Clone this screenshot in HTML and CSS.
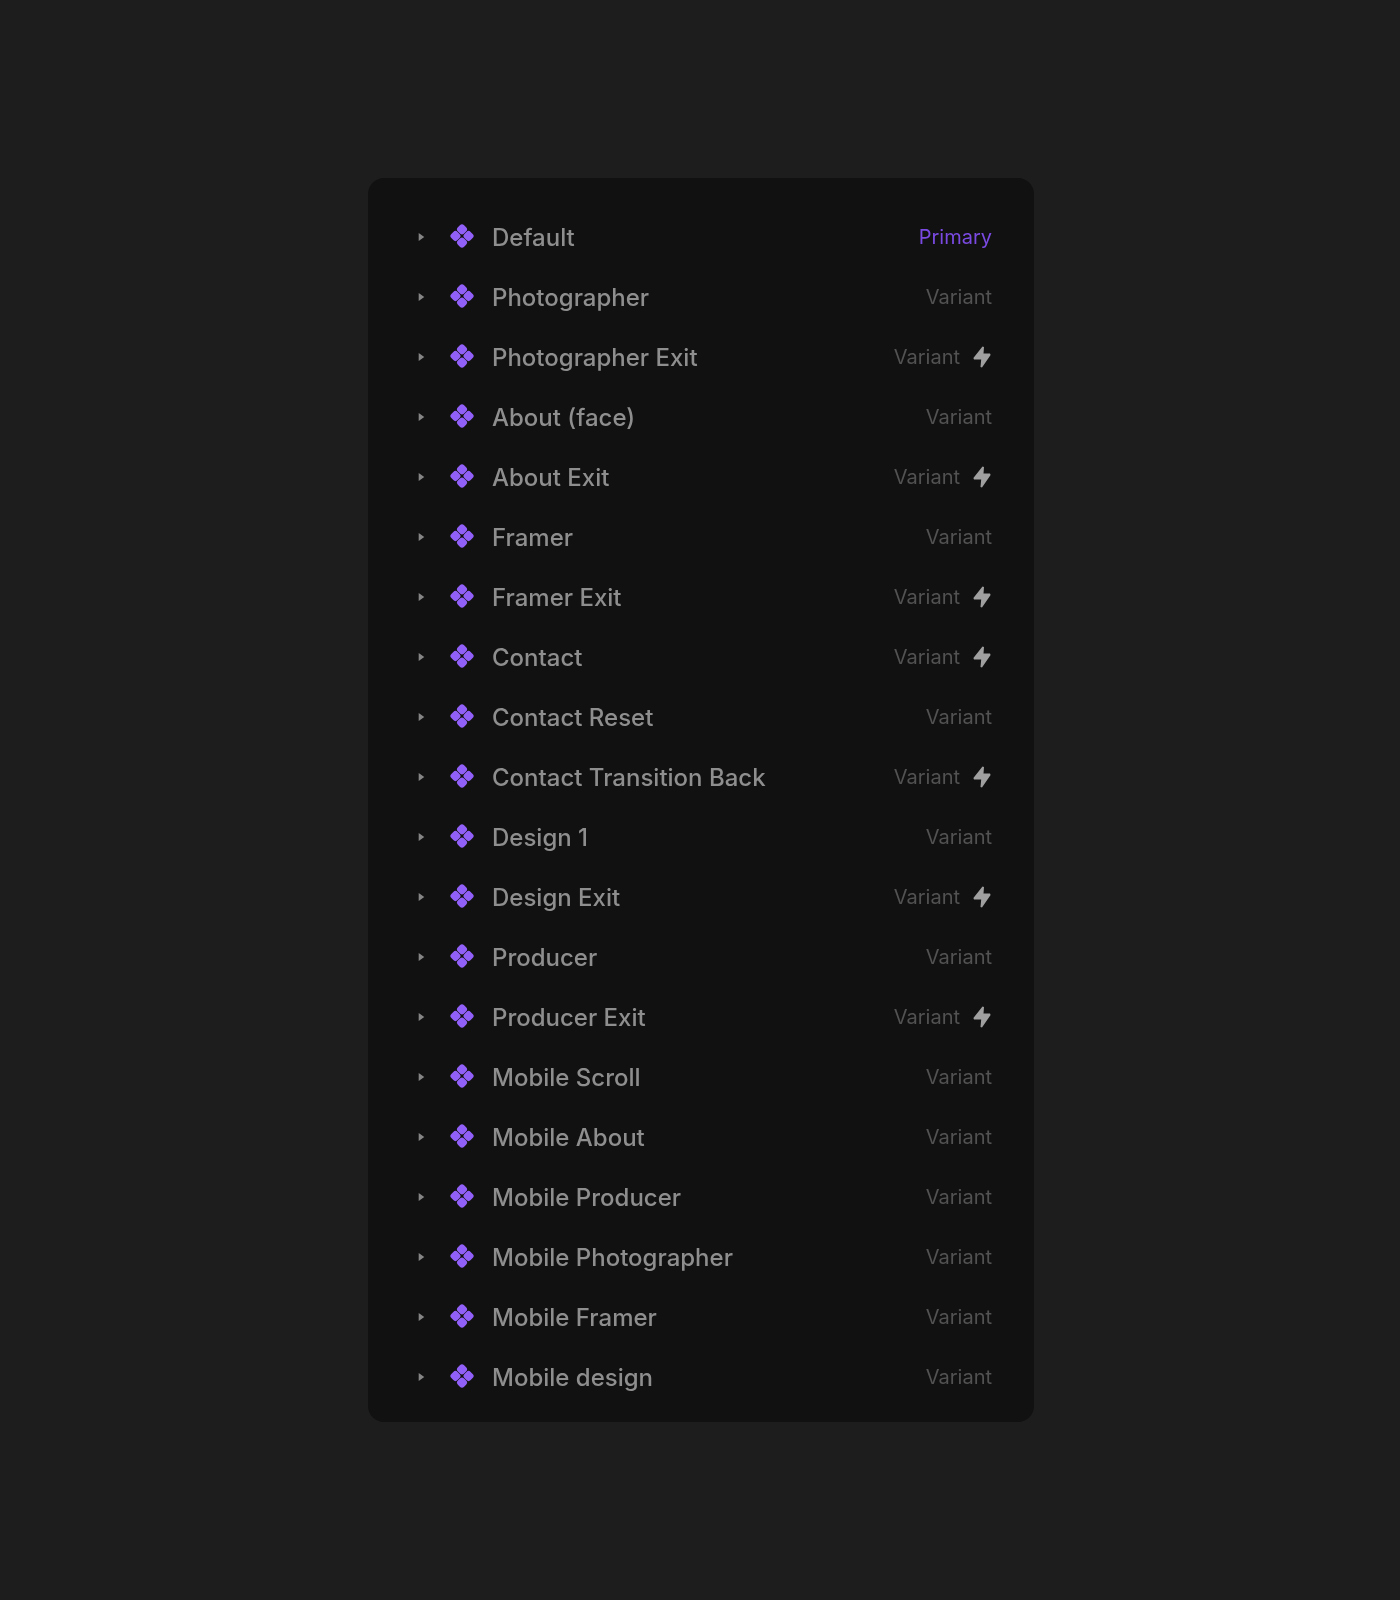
FILE: index.html
```html
<!DOCTYPE html>
<html lang="en">
<head>
<meta charset="utf-8">
<title>Variants</title>
<link rel="stylesheet" href="styles.css">
</head>
<body>
<svg class="defs" width="0" height="0" aria-hidden="true">
  <defs>
    <symbol id="caret" viewBox="0 0 8 10"><path d="M.7 1 L6.3 5 L.7 9 Z"/></symbol>
    <symbol id="comp" viewBox="0 0 24 24">
      <rect x="1.05" y="7.6" width="8.8" height="8.8" rx="3" transform="rotate(45 5.45 12)"/>
      <rect x="14.15" y="7.6" width="8.8" height="8.8" rx="3" transform="rotate(45 18.55 12)"/>
      <rect x="7.6" y="1.05" width="8.8" height="8.8" rx="3" transform="rotate(45 12 5.45)"/>
      <rect x="7.6" y="14.15" width="8.8" height="8.8" rx="3" transform="rotate(45 12 18.55)"/>
    </symbol>
    <symbol id="bolt" viewBox="0 0 18 22"><path d="M9.5 .5 L11 1 L10.5 7.5 H17 L17.6 9 L9 21.5 L7.5 21 L8.2 13.5 H1 L.4 12 Z"/></symbol>
  </defs>
</svg>
<main class="panel">
  <div class="row"><svg class="caret"><use href="#caret"/></svg><svg class="comp"><use href="#comp"/></svg><span class="name">Default</span><span class="tag tag-primary">Primary</span></div>
  <div class="row"><svg class="caret"><use href="#caret"/></svg><svg class="comp"><use href="#comp"/></svg><span class="name">Photographer</span><span class="tag">Variant</span></div>
  <div class="row"><svg class="caret"><use href="#caret"/></svg><svg class="comp"><use href="#comp"/></svg><span class="name">Photographer Exit</span><span class="tag">Variant</span><svg class="bolt"><use href="#bolt"/></svg></div>
  <div class="row"><svg class="caret"><use href="#caret"/></svg><svg class="comp"><use href="#comp"/></svg><span class="name">About (face)</span><span class="tag">Variant</span></div>
  <div class="row"><svg class="caret"><use href="#caret"/></svg><svg class="comp"><use href="#comp"/></svg><span class="name">About Exit</span><span class="tag">Variant</span><svg class="bolt"><use href="#bolt"/></svg></div>
  <div class="row"><svg class="caret"><use href="#caret"/></svg><svg class="comp"><use href="#comp"/></svg><span class="name">Framer</span><span class="tag">Variant</span></div>
  <div class="row"><svg class="caret"><use href="#caret"/></svg><svg class="comp"><use href="#comp"/></svg><span class="name">Framer Exit</span><span class="tag">Variant</span><svg class="bolt"><use href="#bolt"/></svg></div>
  <div class="row"><svg class="caret"><use href="#caret"/></svg><svg class="comp"><use href="#comp"/></svg><span class="name">Contact</span><span class="tag">Variant</span><svg class="bolt"><use href="#bolt"/></svg></div>
  <div class="row"><svg class="caret"><use href="#caret"/></svg><svg class="comp"><use href="#comp"/></svg><span class="name">Contact Reset</span><span class="tag">Variant</span></div>
  <div class="row"><svg class="caret"><use href="#caret"/></svg><svg class="comp"><use href="#comp"/></svg><span class="name">Contact Transition Back</span><span class="tag">Variant</span><svg class="bolt"><use href="#bolt"/></svg></div>
  <div class="row"><svg class="caret"><use href="#caret"/></svg><svg class="comp"><use href="#comp"/></svg><span class="name">Design 1</span><span class="tag">Variant</span></div>
  <div class="row"><svg class="caret"><use href="#caret"/></svg><svg class="comp"><use href="#comp"/></svg><span class="name">Design Exit</span><span class="tag">Variant</span><svg class="bolt"><use href="#bolt"/></svg></div>
  <div class="row"><svg class="caret"><use href="#caret"/></svg><svg class="comp"><use href="#comp"/></svg><span class="name">Producer</span><span class="tag">Variant</span></div>
  <div class="row"><svg class="caret"><use href="#caret"/></svg><svg class="comp"><use href="#comp"/></svg><span class="name">Producer Exit</span><span class="tag">Variant</span><svg class="bolt"><use href="#bolt"/></svg></div>
  <div class="row"><svg class="caret"><use href="#caret"/></svg><svg class="comp"><use href="#comp"/></svg><span class="name">Mobile Scroll</span><span class="tag">Variant</span></div>
  <div class="row"><svg class="caret"><use href="#caret"/></svg><svg class="comp"><use href="#comp"/></svg><span class="name">Mobile About</span><span class="tag">Variant</span></div>
  <div class="row"><svg class="caret"><use href="#caret"/></svg><svg class="comp"><use href="#comp"/></svg><span class="name">Mobile Producer</span><span class="tag">Variant</span></div>
  <div class="row"><svg class="caret"><use href="#caret"/></svg><svg class="comp"><use href="#comp"/></svg><span class="name">Mobile Photographer</span><span class="tag">Variant</span></div>
  <div class="row"><svg class="caret"><use href="#caret"/></svg><svg class="comp"><use href="#comp"/></svg><span class="name">Mobile Framer</span><span class="tag">Variant</span></div>
  <div class="row"><svg class="caret"><use href="#caret"/></svg><svg class="comp"><use href="#comp"/></svg><span class="name">Mobile design</span><span class="tag">Variant</span></div>
</main>
</body>
</html>
```
FILE: styles.css
```css
html, body { margin: 0; padding: 0; }
body {
  min-height: 1600px;
  background: #1d1d1d;
  font-family: Inter, "Liberation Sans", sans-serif;
  padding-top: 178px;
  box-sizing: border-box;
}
.defs { display: block; height: 0; }
.panel {
  width: 666px;
  margin-left: 368px;
  box-sizing: border-box;
  padding: 29px 42px 15px 50px;
  background: #111111;
  border-radius: 16px;
}
.row {
  display: flex;
  align-items: center;
  height: 60px;
  filter: blur(0.4px);
}
.caret { width: 8px; height: 10px; fill: #858585; flex: none; }
.comp { width: 24px; height: 24px; margin: 0 18px 2px 24px; fill: #9160f8; flex: none; }
.name { font-size: 24px; font-weight: 500; color: #8e8e8e; flex: 1; }
.tag { font-size: 20px; font-weight: 400; color: #525252; }
.tag-primary { color: #7a4ae2; }
.bolt { width: 18px; height: 22px; margin-left: 13px; margin-right: 1px; fill: #a0a0a0; flex: none; }
```
